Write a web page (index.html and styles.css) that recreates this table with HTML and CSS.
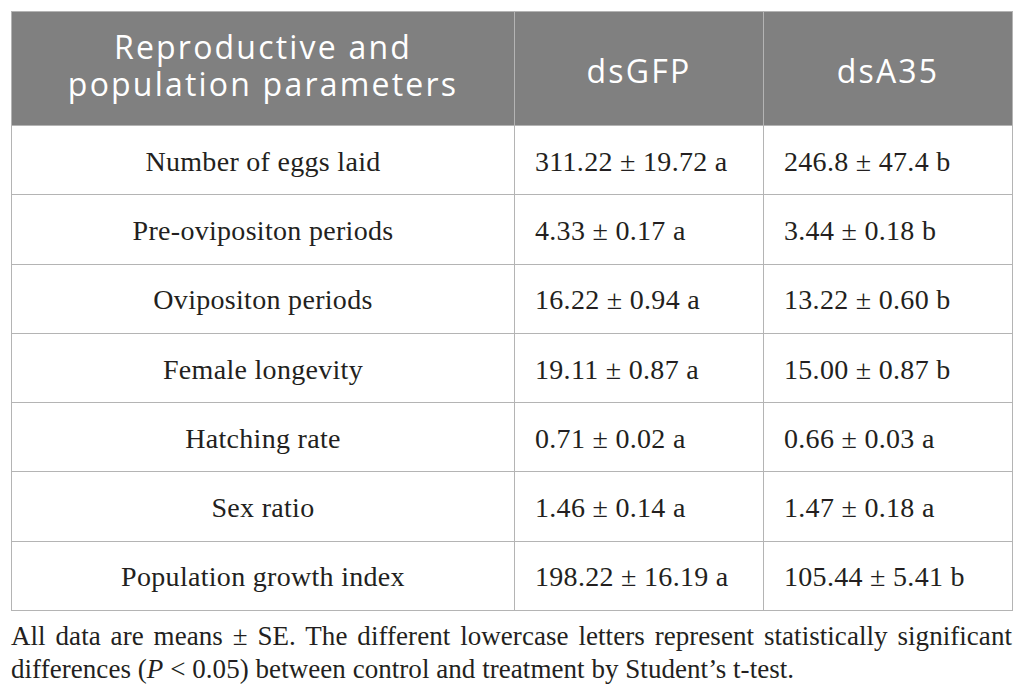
FILE: index.html
```html
<!DOCTYPE html>
<html lang="en">
<head>
<meta charset="utf-8">
<title>Reproductive and population parameters</title>
<link rel="stylesheet" href="styles.css">
</head>
<body>
<div class="page">
  <table class="data">
    <colgroup>
      <col class="c-param">
      <col class="c-val">
      <col class="c-val">
    </colgroup>
    <thead>
      <tr class="head-row">
        <th class="th-param"><span class="hl">Reproductive and</span><span class="hl">population parameters</span></th>
        <th class="th-val">dsGFP</th>
        <th class="th-val">dsA35</th>
      </tr>
    </thead>
    <tbody>
      <tr><td class="param">Number of eggs laid</td><td class="val">311.22 ± 19.72 a</td><td class="val">246.8 ± 47.4 b</td></tr>
      <tr><td class="param">Pre-ovipositon periods</td><td class="val">4.33 ± 0.17 a</td><td class="val">3.44 ± 0.18 b</td></tr>
      <tr><td class="param">Ovipositon periods</td><td class="val">16.22 ± 0.94 a</td><td class="val">13.22 ± 0.60 b</td></tr>
      <tr><td class="param">Female longevity</td><td class="val">19.11 ± 0.87 a</td><td class="val">15.00 ± 0.87 b</td></tr>
      <tr><td class="param">Hatching rate</td><td class="val">0.71 ± 0.02 a</td><td class="val">0.66 ± 0.03 a</td></tr>
      <tr><td class="param">Sex ratio</td><td class="val">1.46 ± 0.14 a</td><td class="val">1.47 ± 0.18 a</td></tr>
      <tr><td class="param">Population growth index</td><td class="val">198.22 ± 16.19 a</td><td class="val">105.44 ± 5.41 b</td></tr>
    </tbody>
  </table>
  <p class="note"><span class="line1">All data are means ± SE. The different lowercase letters represent statistically significant</span><span class="line2">differences (<i>P</i> &lt; 0.05) between control and treatment by Student’s t-test.</span></p>
</div>
</body>
</html>
```

FILE: styles.css
```css
html, body {
  margin: 0;
  padding: 0;
  background: #ffffff;
}

.page {
  padding: 11px 14px 0 11px;
  width: 1001px;
}

.data {
  width: 1001px;
  border-collapse: collapse;
  table-layout: fixed;
  font-family: "Liberation Serif", "Times New Roman", serif;
  color: #231f20;
}

.c-param { width: 503px; }
.c-val { width: 249px; }

.data th,
.data td {
  border: 1px solid #b4b4b4;
  padding: 0;
}

.head-row {
  height: 114px;
}

.data th {
  background: #808080;
  color: #ffffff;
  font-family: "Open Sans", "Lato", sans-serif;
  font-weight: 400;
  font-size: 32px;
  line-height: 37px;
  letter-spacing: 2.2px;
  text-align: center;
  vertical-align: middle;
}

.th-param {
  padding-bottom: 8px !important;
}

.th-val {
  padding-top: 4px !important;
}

.hl {
  display: block;
  height: 37px;
}

.data tbody tr {
  height: 69.3px;
}

.data td {
  font-size: 28px;
  letter-spacing: 0.3px;
  line-height: 32px;
  vertical-align: middle;
  padding-top: 3px;
}

.param {
  text-align: center;
}

.val {
  text-align: left;
  padding-left: 20px !important;
}

.note {
  margin: 9px 0 0 0;
  width: 1001px;
  font-family: "Liberation Serif", "Times New Roman", serif;
  font-size: 27px;
  line-height: 33px;
  letter-spacing: 0.05px;
  color: #231f20;
}

.line1 {
  display: block;
  text-align: justify;
  text-align-last: justify;
}

.line2 {
  display: block;
  text-align: left;
}
```
